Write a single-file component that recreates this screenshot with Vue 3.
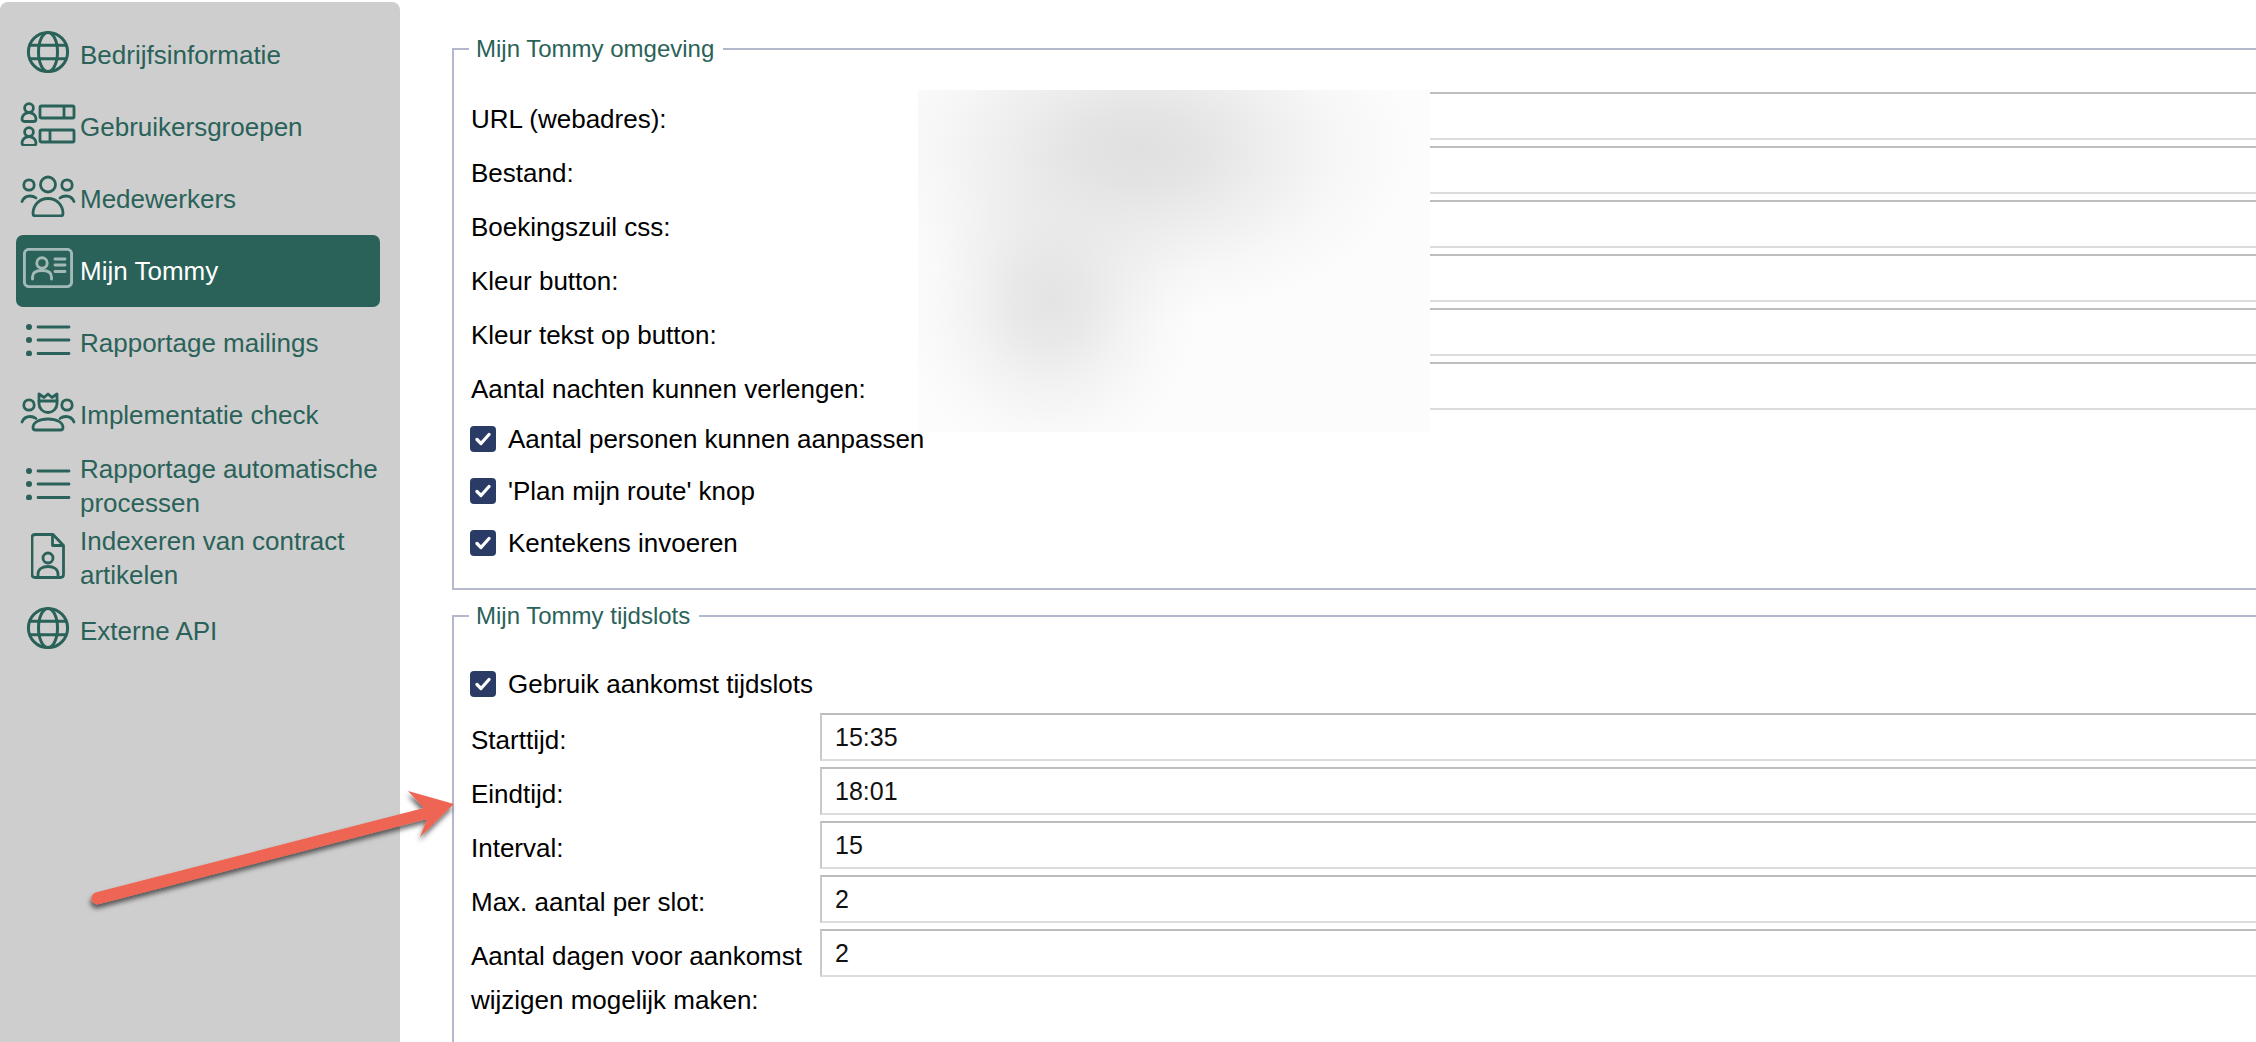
<script setup>
const menu = [
  { label: 'Bedrijfsinformatie', icon: 'globe' },
  { label: 'Gebruikersgroepen', icon: 'groups' },
  { label: 'Medewerkers', icon: 'team' },
  { label: 'Mijn Tommy', icon: 'card', active: true },
  { label: 'Rapportage mailings', icon: 'list' },
  { label: 'Implementatie check', icon: 'crown' },
  { label: 'Rapportage automatische processen', icon: 'list', wrapped: true },
  { label: 'Indexeren van contract artikelen', icon: 'doc', wrapped: true },
  { label: 'Externe API', icon: 'globe' }
]
const envRows = ['URL (webadres):', 'Bestand:', 'Boekingszuil css:', 'Kleur button:', 'Kleur tekst op button:', 'Aantal nachten kunnen verlengen:']
const envChecks = ['Aantal personen kunnen aanpassen', "'Plan mijn route' knop", 'Kentekens invoeren']
const slotRows = [
  { label: 'Starttijd:', value: '15:35' },
  { label: 'Eindtijd:', value: '18:01' },
  { label: 'Interval:', value: '15' },
  { label: 'Max. aantal per slot:', value: '2' },
  { label: 'Aantal dagen voor aankomst wijzigen mogelijk maken:', value: '2' }
]
</script>

<template>
  <div class="page">
    <aside class="sidebar">
      <a v-for="item in menu" :key="item.label" class="item" :class="{ active: item.active }">
        <span class="icon">
          <svg v-if="item.icon === 'globe'" width="44" height="44" viewBox="0 0 44 44" fill="none" stroke="currentColor" stroke-width="3">
            <circle cx="22" cy="22" r="19.6" />
            <ellipse cx="22" cy="22" rx="9.5" ry="19.6" />
            <path d="M3.6 15.2h36.8M3.6 28.8h36.8" />
          </svg>
          <svg v-else-if="item.icon === 'groups'" width="56" height="44" viewBox="0 0 56 44" fill="none" stroke="currentColor" stroke-width="2.8" stroke-linejoin="round">
            <circle cx="9" cy="6" r="4.4" />
            <path d="M2 17c0-3.500 3-6.500 7-6.500s7 3 7 6.500c0 1.500-1 2.500-2.500 2.500h-9C3 19.500 2 18.500 2 17z" />
            <rect x="20" y="4" width="34" height="12" rx="1.500" />
            <path d="M44 4v12" />
            <circle cx="9" cy="30" r="4.400" />
            <path d="M2 41c0-3.500 3-6.500 7-6.500s7 3 7 6.500c0 1.500-1 2.500-2.500 2.500h-9C3 43.500 2 42.500 2 41z" />
            <rect x="20" y="28" width="34" height="12" rx="1.500" />
            <path d="M30 28v12" />
          </svg>
          <svg v-else-if="item.icon === 'team'" width="56" height="42" viewBox="0 0 56 42" fill="none" stroke="currentColor" stroke-width="2.8" stroke-linecap="round">
            <circle cx="28" cy="9.500" r="7.500" />
            <circle cx="9" cy="10" r="5.200" />
            <circle cx="47" cy="10" r="5.200" />
            <path d="M13 38.500c0-8 6-15 15-15s15 7 15 15c0 1.500-1 2.500-2.500 2.500h-25c-1.500 0-2.500-1-2.500-2.500z" />
            <path d="M2 26.500c1.500-3.500 4.500-5.500 8-5.500 2.500 0 4.500.8 6 2M54 26.500c-1.500-3.500-4.500-5.500-8-5.500-2.500 0-4.500.8-6 2" />
          </svg>
          <svg v-else-if="item.icon === 'card'" width="50" height="40" viewBox="0 0 50 40" fill="none" stroke="#a3bab6" stroke-width="2.900" stroke-linecap="round">
            <rect x="1.400" y="1.400" width="47.200" height="37.200" rx="4.500" />
            <circle cx="19" cy="15" r="5.200" />
            <path d="M9.500 31v-2c0-4 3.500-6.500 9.500-6.500s9.500 2.500 9.500 6.500v2" />
            <path d="M32 11h10M32 17h10M32 23.500h10" />
          </svg>
          <svg v-else-if="item.icon === 'list'" width="46" height="32" viewBox="0 0 46 32" fill="none" stroke="currentColor" stroke-width="2.800" stroke-linecap="round">
            <path d="M13 3h31M13 16h31M13 29.500h31" />
            <circle cx="4" cy="3" r="3" fill="currentColor" stroke="none" />
            <circle cx="4" cy="16" r="3" fill="currentColor" stroke="none" />
            <circle cx="4" cy="29.500" r="3" fill="currentColor" stroke="none" />
          </svg>
          <svg v-else-if="item.icon === 'crown'" width="56" height="40" viewBox="0 0 56 40" fill="none" stroke="currentColor" stroke-width="2.800" stroke-linecap="round" stroke-linejoin="round">
            <path d="M19 2l5 3.500L28 2l4 3.500L37 2v9.500c0 5-4 9-9 9s-9-4-9-9z" />
            <path d="M19 9h18" />
            <circle cx="9" cy="13" r="5.200" />
            <circle cx="47" cy="13" r="5.200" />
            <path d="M13 35.500c0-5 6-8.500 15-8.500s15 3.500 15 8.500c0 1.500-1 2.500-2.500 2.500h-25c-1.500 0-2.500-1-2.500-2.500z" />
            <path d="M2 30c1.500-3.500 4.500-5.500 8-5.500 2.500 0 4.500.8 6 2M54 30c-1.500-3.500-4.500-5.500-8-5.500-2.500 0-4.500.8-6 2" />
          </svg>
          <svg v-else-if="item.icon === 'doc'" width="34" height="46" viewBox="0 0 34 46" fill="none" stroke="currentColor" stroke-width="2.800" stroke-linejoin="round">
            <path d="M4 1.500h18l10.500 11V41.500c0 1.700-1.300 3-3 3H4c-1.700 0-3-1.300-3-3V4.500c0-1.700 1.300-3 3-3z" />
            <path d="M21.500 1.500v11h11" />
            <circle cx="17" cy="25" r="5" />
            <path d="M7 44v-3c0-4.500 4-7.500 10-7.500s10 3 10 7.500v3" />
          </svg>
        </span>
        <span class="item-label" :class="{ wrapped: item.wrapped }">{{ item.label }}</span>
      </a>
    </aside>

    <main class="main">
      <fieldset class="group">
        <legend>Mijn Tommy omgeving</legend>
        <div class="rows env">
          <div v-for="row in envRows" :key="row" class="row">
            <label>{{ row }}</label>
            <input type="text" readonly />
          </div>
        </div>
        <div class="checks">
          <label v-for="c in envChecks" :key="c" class="check">
            <span class="box">
              <svg width="16" height="14" viewBox="0 0 16 14" fill="none" stroke="#fff" stroke-width="3.200" stroke-linecap="round" stroke-linejoin="round"><path d="M2 7.500l4 4L14 2.500" /></svg>
            </span>
            {{ c }}
          </label>
        </div>
      </fieldset>

      <fieldset class="group second">
        <legend>Mijn Tommy tijdslots</legend>
        <label class="check">
          <span class="box">
            <svg width="16" height="14" viewBox="0 0 16 14" fill="none" stroke="#fff" stroke-width="3.200" stroke-linecap="round" stroke-linejoin="round"><path d="M2 7.500l4 4L14 2.500" /></svg>
          </span>
          Gebruik aankomst tijdslots
        </label>
        <div class="rows slots">
          <div v-for="row in slotRows" :key="row.label" class="row">
            <label>{{ row.label }}</label>
            <input type="text" readonly :value="row.value" />
          </div>
        </div>
      </fieldset>
    </main>

    <div class="redaction"></div>

    <svg class="arrow" width="400" height="140" viewBox="80 780 400 140">
      <defs>
        <filter id="arrow-shadow" x="-10%" y="-20%" width="120%" height="150%">
          <feDropShadow dx="-1" dy="4" stdDeviation="2.500" flood-color="#000" flood-opacity="0.6" />
        </filter>
      </defs>
      <path filter="url(#arrow-shadow)" fill="#ee6552" d="M95.500 892.500 L424 808 L408 791 L454 804 L420 837 L427 819 L99.500 904 A6 6 0 0 1 95.500 892.500 Z" />
    </svg>
  </div>
</template>

<style scoped>
.page {
  position: relative;
  display: flex;
  align-items: flex-start;
  width: 2256px;
  height: 1042px;
  overflow: hidden;
  background: #fff;
  font-family: "Liberation Sans", Arial, sans-serif;
  font-size: 26px;
  color: #000;
}
.sidebar {
  flex: 0 0 400px;
  box-sizing: border-box;
  height: 1040px;
  margin-top: 2px;
  padding: 17px 20px 0 16px;
  background: #cecece;
  border-radius: 8px 8px 0 0;
}
.item {
  display: flex;
  align-items: center;
  height: 72px;
  color: #2a6259;
  border-radius: 7px;
  line-height: 34px;
}
.item.active {
  background: #2a6259;
  color: #fff;
}
.icon {
  flex: 0 0 64px;
  display: flex;
  justify-content: center;
  align-items: center;
  padding-bottom: 7px;
}
.icon svg {
  display: block;
}
.item-label {
  flex: 1;
  min-width: 0;
}
.item-label.wrapped {
  margin-top: -2px;
}
.main {
  flex: 1;
  min-width: 0;
  padding: 35px 0 0 52px;
}
.group {
  box-sizing: border-box;
  width: 1900px;
  margin: 0;
  padding: 29px 0 19px 17px;
  border: 2px solid #b4b8cc;
}
.group.second {
  margin-top: 12px;
  padding-top: 28px;
}
legend {
  margin-left: -2px;
  padding: 0 9px 0 7px;
  font-size: 24px;
  line-height: 28px;
  color: #2a6259;
}
.row {
  display: flex;
  align-items: flex-start;
  margin-bottom: 5px;
}
.row label {
  box-sizing: border-box;
  padding-top: 5px;
  line-height: 44px;
}
.env .row label {
  flex: 0 0 450px;
}
.slots .row label {
  flex: 0 0 349px;
}
.row input {
  flex: 1;
  box-sizing: border-box;
  height: 48px;
  margin: 0;
  padding: 0 13px;
  border: 2px solid #dcdcdc;
  border-top-color: #bdbdbd;
  border-left-color: #c9c9c9;
  border-radius: 0;
  outline: none;
  background: #fff;
  font-family: inherit;
  font-size: 25px;
  color: #111;
}
.checks {
  margin-top: -3px;
}
.check {
  display: flex;
  align-items: center;
  gap: 12px;
  height: 52px;
}
.second .check {
  margin-bottom: 3px;
}
.box {
  flex: 0 0 26px;
  display: flex;
  justify-content: center;
  align-items: center;
  height: 26px;
  margin-left: -1px;
  border-radius: 4px;
  background: #2a3c66;
}
.redaction {
  position: absolute;
  left: 918px;
  top: 90px;
  width: 512px;
  height: 342px;
  background:
    radial-gradient(ellipse 275px 170px at 220px 60px, rgba(224, 224, 224, 1) 0%, rgba(224, 224, 224, 0.85) 22%, rgba(224, 224, 224, 0.5) 48%, rgba(224, 224, 224, 0.18) 74%, rgba(224, 224, 224, 0) 100%),
    radial-gradient(ellipse 150px 165px at 132px 212px, rgba(228, 228, 228, 1) 0%, rgba(228, 228, 228, 0.8) 25%, rgba(228, 228, 228, 0.4) 52%, rgba(228, 228, 228, 0.12) 78%, rgba(228, 228, 228, 0) 100%),
    linear-gradient(#fcfcfc, #fcfcfc);
}
.arrow {
  position: absolute;
  left: 80px;
  top: 780px;
}
</style>

<style>
html, body {
  margin: 0;
  overflow: hidden;
  background: #fff;
}
</style>
